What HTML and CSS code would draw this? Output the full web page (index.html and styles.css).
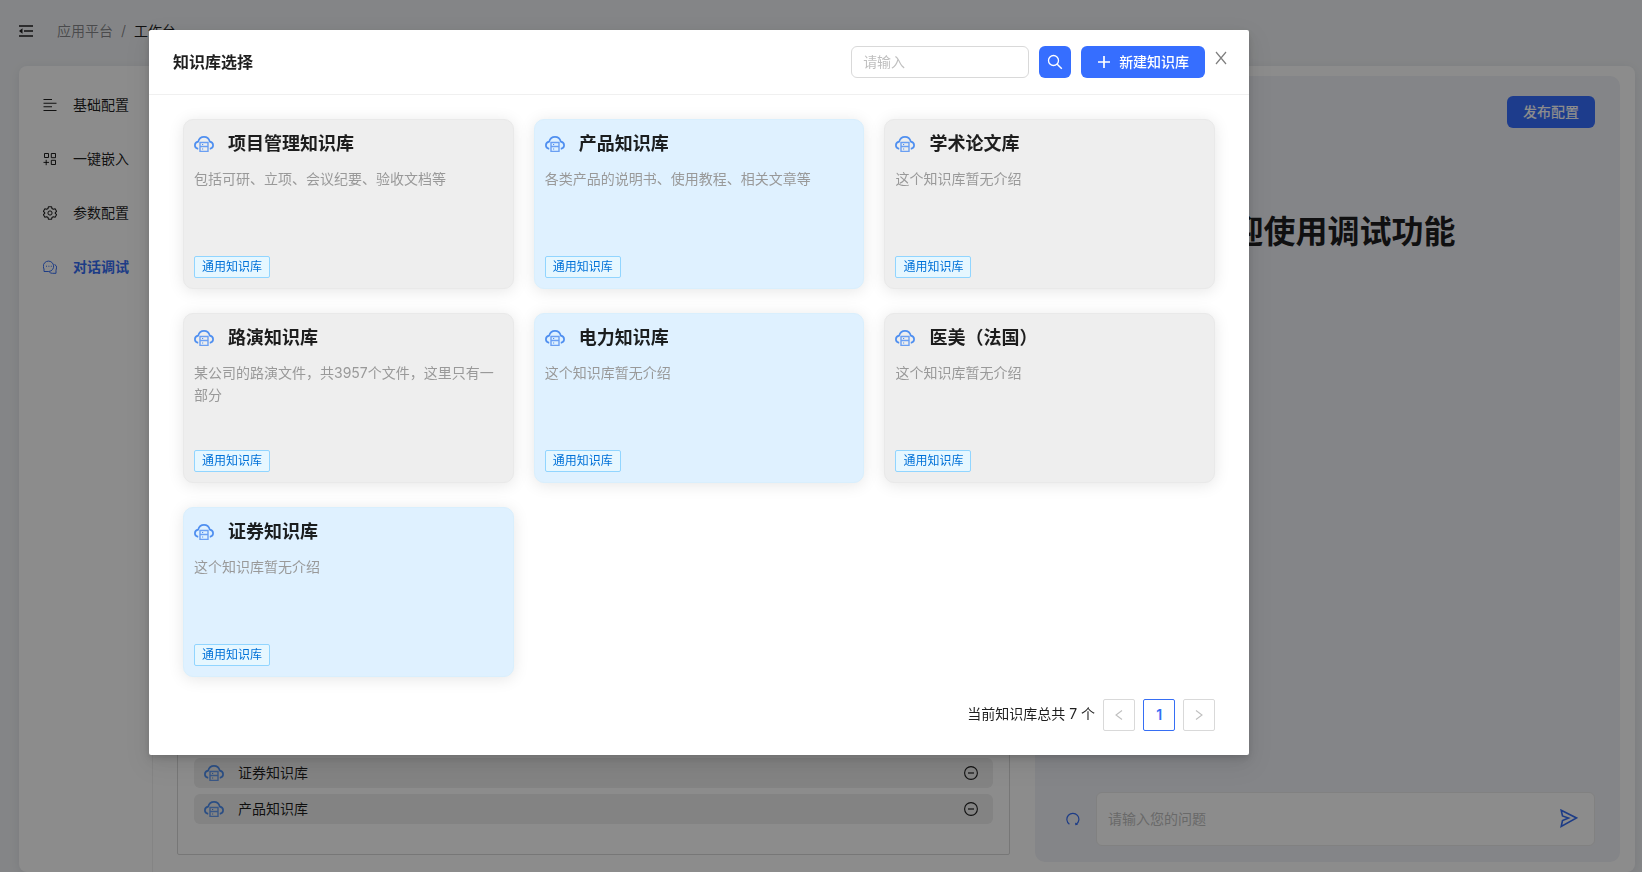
FILE: index.html
```html
<!DOCTYPE html>
<html lang="zh-CN">
<head>
<meta charset="utf-8">
<title>知识库选择</title>
<link rel="stylesheet" href="styles.css">
</head>
<body>
<svg class="sprite" aria-hidden="true">
  <symbol id="cloud" viewBox="0 0 20 16">
    <path d="M4.200 12.800C1.800 12.400.9 11 .9 9.300.9 7.400 2.300 6 4.200 5.600 5 2.800 7.200.9 10 .9s5 1.900 5.800 4.700c1.900.4 3.300 1.800 3.300 3.700 0 1.700-.9 3.100-3.300 3.500" fill="none" stroke="#4f8ff0" stroke-width="1.700"/>
    <path d="M6 6.500h8v9H6zM6 10.500h8" fill="none" stroke="#6a9ff3" stroke-width="1.400"/>
    <path d="M8 8.500h1.200M8 13h1.200" stroke="#4f8ff0" stroke-width="1"/>
  </symbol>
  <symbol id="minus" viewBox="0 0 14 14">
    <circle cx="7" cy="7" r="6.400" fill="none" stroke="currentColor" stroke-width="1.100"/>
    <path d="M4 7h6" stroke="currentColor" stroke-width="1.200"/>
  </symbol>
</svg>

<div class="app">
  <header class="topbar">
    <button class="icon-btn" type="button" aria-label="收起菜单">
      <svg width="14" height="14" viewBox="0 0 14 14"><path d="M0 2h14M5 7h9M0 12h14" fill="none" stroke="currentColor" stroke-width="1.300"/><path d="M0 7l3.500-2.700v5.400z" fill="currentColor"/></svg>
    </button>
    <nav class="crumbs"><a href="#">应用平台</a><span>/</span><span class="current">工作台</span></nav>
  </header>

  <div class="workspace">
    <nav class="side">
      <a class="side-link" href="#">
        <svg width="14" height="14" viewBox="0 0 14 14"><path d="M.5 1.500h8.500M.5 5.200h13M.5 8.800h8.500M.5 12.500h13" fill="none" stroke="currentColor" stroke-width="1.100"/></svg>基础配置</a>
      <a class="side-link" href="#">
        <svg width="14" height="14" viewBox="0 0 14 14"><path d="M1.500 1.500h4v4h-4zM8.300 1.500h4.200v4.200H8.300zM8.300 8.300h4.200v4.200H8.300zM.5 10.400h5.500M3.200 7.800v5.400" fill="none" stroke="currentColor" stroke-width="1"/></svg>一键嵌入</a>
      <a class="side-link" href="#">
        <svg width="14" height="14" viewBox="0 0 14 14"><path d="M5.500.7h3l.5 1.800 1.300.7 1.800-.5 1.500 2.600L12.300 6.600v.8l1.300 1.300-1.500 2.600-1.800-.5-1.300.7-.5 1.800h-3L5 11.500l-1.300-.7-1.800.5L.4 8.700l1.300-1.300v-.8L.4 5.300l1.500-2.600 1.800.5L5 2.500z" fill="none" stroke="currentColor" stroke-width="1.100" stroke-linejoin="round"/><circle cx="7" cy="7" r="2.100" fill="none" stroke="currentColor" stroke-width="1"/></svg>参数配置</a>
      <a class="side-link active" href="#">
        <svg width="14" height="14" viewBox="0 0 14 14"><path d="M1 11.500V9a5.200 5.200 0 1 1 4.800 2.500zM11.700 4.200a4.600 4.600 0 0 1 1.300 6.100v3H9.500a4.600 4.600 0 0 1-3.200-1.200" fill="none" stroke="currentColor" stroke-width="1" stroke-linejoin="round"/><path d="M3 6.300h1M5.400 6.300h1M7.800 6.300h1" stroke="currentColor" stroke-width="1.100"/></svg>对话调试</a>
    </nav>

    <section class="config">
      <div class="picked">
        <div class="picked-row"><svg width="20" height="16"><use href="#cloud"/></svg><span>证券知识库</span>
          <button class="icon-btn" type="button" aria-label="移除证券知识库"><svg width="14" height="14"><use href="#minus"/></svg></button></div>
        <div class="picked-row"><svg width="20" height="16"><use href="#cloud"/></svg><span>产品知识库</span>
          <button class="icon-btn" type="button" aria-label="移除产品知识库"><svg width="14" height="14"><use href="#minus"/></svg></button></div>
      </div>
    </section>

    <section class="chat">
      <button class="btn" type="button">发布配置</button>
      <h1>欢迎使用调试功能</h1>
      <form class="ask">
        <button class="icon-btn blue" type="button" aria-label="重新开始"><svg width="14" height="14" viewBox="0 0 14 14"><path d="M3.400 12.200A6 6 0 1 1 10.200 12.300" fill="none" stroke="currentColor" stroke-width="1.200"/><path d="M9 10.400l.3 2.900 2.800-.5z" fill="currentColor"/></svg></button>
        <div class="ask-box">
          <input type="text" aria-label="问题" placeholder="请输入您的问题">
          <button class="icon-btn blue" type="button" aria-label="发送"><svg width="18" height="20" viewBox="0 0 18 20"><path d="M1.200 1.300L16.500 9 1.200 17.500l1.300-6L8.500 9 2.500 7z" fill="none" stroke="currentColor" stroke-width="1.600"/></svg></button>
        </div>
      </form>
    </section>
  </div>
</div>

<div class="mask">
  <div class="modal" role="dialog" aria-modal="true" aria-labelledby="dlg-title">
    <header class="modal-head">
      <h2 id="dlg-title">知识库选择</h2>
      <input class="search" type="text" aria-label="搜索知识库" placeholder="请输入">
      <button class="btn square" type="button" aria-label="搜索"><svg width="16" height="16" viewBox="0 0 16 16"><circle cx="6.500" cy="6.500" r="5" fill="none" stroke="currentColor" stroke-width="1.300"/><path d="M10.200 10.200l4.600 4.600" stroke="currentColor" stroke-width="1.500"/></svg></button>
      <button class="btn" type="button"><svg width="14" height="14" viewBox="0 0 14 14"><path d="M1 7h12M7 1v12" stroke="currentColor" stroke-width="1.700"/></svg>新建知识库</button>
      <button class="icon-btn close" type="button" aria-label="关闭"><svg width="12" height="14" viewBox="0 0 12 14"><path d="M1 1l10 12M11 1L1 13" stroke="currentColor" stroke-width="1.200"/></svg></button>
    </header>
    <div class="modal-body">
      <div class="cards">
        <article class="card"><h3><svg width="20" height="16"><use href="#cloud"/></svg>项目管理知识库</h3><p>包括可研、立项、会议纪要、验收文档等</p><span class="tag">通用知识库</span></article>
        <article class="card selected"><h3><svg width="20" height="16"><use href="#cloud"/></svg>产品知识库</h3><p>各类产品的说明书、使用教程、相关文章等</p><span class="tag">通用知识库</span></article>
        <article class="card"><h3><svg width="20" height="16"><use href="#cloud"/></svg>学术论文库</h3><p>这个知识库暂无介绍</p><span class="tag">通用知识库</span></article>
        <article class="card"><h3><svg width="20" height="16"><use href="#cloud"/></svg>路演知识库</h3><p>某公司的路演文件，共3957个文件，这里只有一部分</p><span class="tag">通用知识库</span></article>
        <article class="card selected"><h3><svg width="20" height="16"><use href="#cloud"/></svg>电力知识库</h3><p>这个知识库暂无介绍</p><span class="tag">通用知识库</span></article>
        <article class="card"><h3><svg width="20" height="16"><use href="#cloud"/></svg>医美（法国）</h3><p>这个知识库暂无介绍</p><span class="tag">通用知识库</span></article>
        <article class="card selected"><h3><svg width="20" height="16"><use href="#cloud"/></svg>证券知识库</h3><p>这个知识库暂无介绍</p><span class="tag">通用知识库</span></article>
      </div>
      <nav class="pager" aria-label="分页">
        <span>当前知识库总共 7 个</span>
        <button type="button" disabled aria-label="上一页"><svg width="8" height="12" viewBox="0 0 8 12"><path d="M7 1.500L1 6l6 4.500" fill="none" stroke="currentColor" stroke-width="1.100"/></svg></button>
        <button type="button" class="on">1</button>
        <button type="button" disabled aria-label="下一页"><svg width="8" height="12" viewBox="0 0 8 12"><path d="M1 1.500L7 6l-6 4.500" fill="none" stroke="currentColor" stroke-width="1.100"/></svg></button>
      </nav>
    </div>
  </div>
</div>
</body>
</html>
```
FILE: styles.css
```css
* { box-sizing: border-box; }
body {
  margin: 0;
  font: 14px/22px Inter, "Noto Sans CJK SC", sans-serif;
  color: rgba(0, 0, 0, .88);
  background: #f1f3f6;
}
h1, h2, h3, p { margin: 0; }
a { color: inherit; text-decoration: none; }
button, input { font: inherit; color: inherit; }
button { cursor: pointer; }
svg { flex: none; display: block; }
.sprite { display: none; }

.icon-btn {
  display: flex;
  padding: 0;
  border: 0;
  background: none;
}
.icon-btn.blue { color: #366ef4; }
.btn {
  display: flex;
  align-items: center;
  justify-content: center;
  gap: 8px;
  height: 32px;
  padding: 0 16px;
  border: 0;
  border-radius: 6px;
  background: #366eff;
  color: #fff;
  font-weight: 500;
}
.btn.square { width: 32px; padding: 0; }

/* page behind the dialog */
.app {
  display: flex;
  flex-direction: column;
  height: 100vh;
  overflow: hidden;
}
.topbar {
  display: flex;
  align-items: center;
  gap: 24px;
  height: 66px;
  padding: 0 19px 4px;
}
.crumbs { display: flex; gap: 8px; color: rgba(0, 0, 0, .45); }
.crumbs .current { color: rgba(0, 0, 0, .88); }
.workspace {
  flex: 1;
  display: grid;
  grid-template-columns: 134px 147fr 100fr;
  margin: 0 7px 0 19px;
  border-radius: 8px;
  background: #fff;
  box-shadow: 0 2px 12px rgba(0, 0, 0, .08);
}
.side {
  display: flex;
  flex-direction: column;
  gap: 32px;
  padding: 28px 24px;
  border-right: 1px solid #f0f0f0;
}
.side-link { display: flex; align-items: center; gap: 16px; white-space: nowrap; }
.side-link.active { color: #366ef4; font-weight: 700; }
.config { display: flex; padding: 24px 25px 17px 24px; }
.picked {
  flex: 1;
  display: flex;
  flex-direction: column;
  justify-content: flex-end;
  gap: 6px;
  padding: 16px 16px 30px;
  border: 1px solid #d9d9d9;
  border-radius: 2px;
}
.picked-row {
  display: flex;
  align-items: center;
  gap: 14px;
  height: 30px;
  padding: 0 15px 0 10px;
  border-radius: 6px;
  background: #eee;
}
.picked-row .icon-btn { margin-left: auto; }
.chat {
  display: flex;
  flex-direction: column;
  margin: 10px 15px 10px 0;
  padding: 20px 25px 16px;
  border-radius: 10px;
  background: #f0f2f8;
}
.chat > .btn { align-self: flex-end; }
.chat h1 {
  margin-top: 80px;
  font-size: 32px;
  line-height: 48px;
  font-weight: 600;
  text-align: center;
}
.ask { display: flex; align-items: center; gap: 16px; margin-top: auto; padding-left: 6px; }
.ask-box {
  flex: 1;
  display: flex;
  align-items: center;
  height: 54px;
  padding: 0 16px 0 11px;
  border: 1px solid #ebebeb;
  border-radius: 6px;
  background: #fff;
}
.ask-box input { flex: 1; padding: 0; border: 0; background: none; outline: 0; }
input::placeholder { color: #bfbfbf; opacity: 1; }

/* dialog */
.mask {
  position: fixed;
  inset: 0;
  padding: 30px 0 0 149px;
  background: rgba(0, 0, 0, .45);
}
.modal {
  width: 67vw;
  background: #fff;
  border-radius: 2px;
  box-shadow: 0 6px 16px rgba(0, 0, 0, .08), 0 3px 6px rgba(0, 0, 0, .12), 0 9px 28px 8px rgba(0, 0, 0, .05);
}
.modal-head {
  display: flex;
  align-items: center;
  gap: 10px;
  padding: 16px 22px 16px 24px;
  border-bottom: 1px solid #f0f0f0;
}
.modal-head h2 { font-size: 16px; line-height: 24px; font-weight: 600; margin-right: auto; }
.search {
  width: 178px;
  height: 32px;
  padding: 0 11px 2px;
  border: 1px solid #d9d9d9;
  border-radius: 6px;
}
.close { align-self: flex-start; padding-top: 5px; color: #7f7f7f; }
.modal-body { padding: 24px 34px; }
.cards {
  display: grid;
  grid-template-columns: repeat(3, 1fr);
  gap: 24px 20px;
}
.card {
  display: flex;
  flex-direction: column;
  align-items: flex-start;
  min-height: 170px;
  padding: 10px;
  border: 1px solid #e9e9e9;
  border-radius: 10px;
  background: #eee;
  box-shadow: 0 2px 16px rgba(0, 0, 0, .1);
}
.card.selected { background: #dff1ff; border-color: #d9effd; }
.card h3 {
  display: flex;
  align-items: center;
  gap: 14px;
  font-size: 18px;
  line-height: 28px;
  font-weight: 600;
}
.card p { margin-top: 10px; color: #999; }
.tag {
  margin-top: auto;
  padding: 0 7px;
  border: 1px solid #91d5ff;
  border-radius: 2px;
  background: #e6f7ff;
  color: #0071d8;
  font-size: 12px;
  line-height: 20px;
}
.pager {
  display: flex;
  justify-content: flex-end;
  gap: 8px;
  margin-top: 22px;
  line-height: 30px;
}
.pager button {
  display: flex;
  align-items: center;
  justify-content: center;
  width: 32px;
  height: 32px;
  padding: 0;
  border: 1px solid #d9d9d9;
  border-radius: 2px;
  background: #fff;
  color: #bfbfbf;
}
.pager .on { border-color: #366ef4; color: #366ef4; font-weight: 600; }
```
